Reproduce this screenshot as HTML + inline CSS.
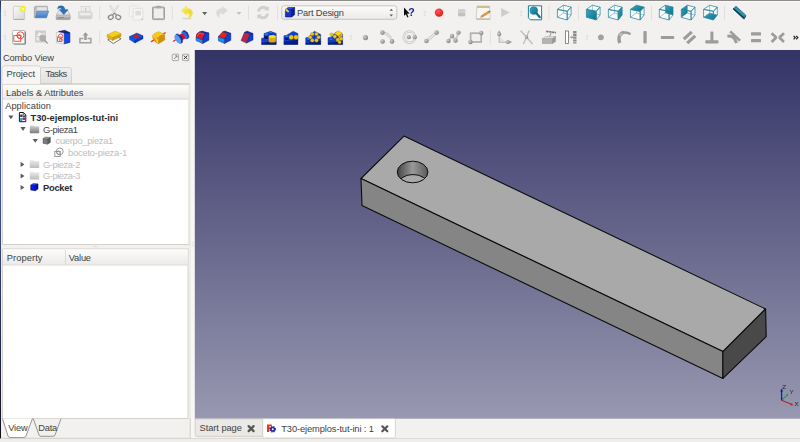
<!DOCTYPE html>
<html><head><meta charset="utf-8"><title>FreeCAD</title>
<style>
html,body{margin:0;padding:0;background:#f2f1f0;}
#app{position:relative;width:800px;height:442px;overflow:hidden;background:#f2f1f0;font-family:"Liberation Sans",sans-serif;font-size:9.3px;color:#424242;}
#gfx{position:absolute;left:0;top:0;}
.t{position:absolute;white-space:nowrap;line-height:12px;height:12px;}
.b{font-weight:bold;color:#2b2b2b;}
.g{color:#bdbdbd;}
</style></head><body>
<div id="app">
<svg id="gfx" width="800" height="442" viewBox="0 0 800 442">
<defs>
<linearGradient id="bg3d" x1="0" y1="0" x2="0" y2="1"><stop offset="0" stop-color="#333366"/><stop offset="1" stop-color="#9898b1"/></linearGradient>
<linearGradient id="hole" x1="0" y1="0" x2="1" y2="0"><stop offset="0" stop-color="#444"/><stop offset="0.5" stop-color="#999"/><stop offset="1" stop-color="#5a5a5a"/></linearGradient>
<linearGradient id="hdr" x1="0" y1="0" x2="0" y2="1"><stop offset="0" stop-color="#fcfcfb"/><stop offset="1" stop-color="#ebeae8"/></linearGradient>
<linearGradient id="tabi" x1="0" y1="0" x2="0" y2="1"><stop offset="0" stop-color="#f0efed"/><stop offset="1" stop-color="#e4e2df"/></linearGradient>
<linearGradient id="gfold" x1="0" y1="0" x2="0" y2="1"><stop offset="0" stop-color="#d8d8d8"/><stop offset="1" stop-color="#7a7a7a"/></linearGradient>
<linearGradient id="gfoldL" x1="0" y1="0" x2="0" y2="1"><stop offset="0" stop-color="#ededed"/><stop offset="1" stop-color="#bdbdbd"/></linearGradient>
<linearGradient id="gpage" x1="0" y1="0" x2="1" y2="1"><stop offset="0" stop-color="#fafafa"/><stop offset="1" stop-color="#d6d6d6"/></linearGradient>
<linearGradient id="gblue" x1="0" y1="0" x2="0" y2="1"><stop offset="0" stop-color="#7aaae0"/><stop offset="1" stop-color="#3f78bd"/></linearGradient>
<linearGradient id="gdrive" x1="0" y1="0" x2="0" y2="1"><stop offset="0" stop-color="#d8d8d8"/><stop offset="1" stop-color="#8c8c8c"/></linearGradient>
<linearGradient id="gteal" x1="0" y1="0" x2="1" y2="1"><stop offset="0" stop-color="#3aa6c0"/><stop offset="1" stop-color="#0d6f8c"/></linearGradient>
<linearGradient id="gyel" x1="0" y1="0" x2="0" y2="1"><stop offset="0" stop-color="#ffe14a"/><stop offset="1" stop-color="#d89a00"/></linearGradient>
<radialGradient id="gred" cx="0.4" cy="0.35" r="0.7"><stop offset="0" stop-color="#ff5a5a"/><stop offset="1" stop-color="#e01010"/></radialGradient>
<radialGradient id="gsph" cx="0.35" cy="0.35" r="0.7"><stop offset="0" stop-color="#cfcfcf"/><stop offset="1" stop-color="#808080"/></radialGradient>
<linearGradient id="lstripe" x1="0" y1="0" x2="0" y2="1"><stop offset="0" stop-color="#1c2c55"/><stop offset="0.03" stop-color="#4565a8"/><stop offset="0.45" stop-color="#3f5090"/><stop offset="0.75" stop-color="#262e55"/><stop offset="1" stop-color="#101018"/></linearGradient>
<linearGradient id="gundo" x1="0" y1="0" x2="1" y2="1"><stop offset="0" stop-color="#f6ea6a"/><stop offset="0.6" stop-color="#efdc28"/><stop offset="1" stop-color="#f2e45a"/></linearGradient>
<linearGradient id="glego" x1="0" y1="0" x2="1" y2="1"><stop offset="0" stop-color="#0c54e0"/><stop offset="0.6" stop-color="#0a3cc8"/><stop offset="1" stop-color="#0628a0"/></linearGradient>
<filter id="soft" x="0" y="0" width="800" height="442" filterUnits="userSpaceOnUse"><feGaussianBlur stdDeviation="0.32"/></filter>
<clipPath id="holeclip"><ellipse cx="412.6" cy="172" rx="15.3" ry="10.8"/></clipPath>
</defs>
<!-- window bg -->
<rect x="0" y="0" width="800" height="442" fill="#f2f1f0"/>
<rect x="0" y="0" width="800" height="0.85" fill="#6f6c69"/>
<rect x="0" y="0.8" width="1.2" height="442" fill="url(#lstripe)"/><rect x="1.2" y="1" width="1.2" height="441" fill="#f9f8f7"/>
<rect x="1.15" y="0.9" width="799" height="1" fill="#fbfbfa"/>
<!-- 3D view -->
<g id="view3d">
<rect x="194.7" y="49.8" width="606" height="368.9" fill="url(#bg3d)"/>
<polygon points="404,136.1 361,178.5 722.9,351.6 765.6,309" fill="#a9a9a9" stroke="#0c0c0c" stroke-width="1.1" stroke-linejoin="round"/>
<polygon points="361,178.5 362,205.5 722.9,378.4 722.9,351.6" fill="#858585" stroke="#0c0c0c" stroke-width="1.1" stroke-linejoin="round"/>
<polygon points="722.9,351.6 722.9,378.4 766.2,336.6 765.6,309" fill="#494949" stroke="#0c0c0c" stroke-width="1.1" stroke-linejoin="round"/>
<ellipse cx="412.6" cy="172" rx="15.3" ry="10.8" fill="url(#hole)"/>
<g clip-path="url(#holeclip)"><ellipse cx="413" cy="185.4" rx="15.3" ry="10.9" fill="#a9a9a9" stroke="#0c0c0c" stroke-width="1"/></g>
<ellipse cx="412.6" cy="172" rx="15.3" ry="10.8" fill="none" stroke="#0c0c0c" stroke-width="1"/>
</g>
<!-- left panel -->
<g id="panel">
<!-- tabs -->
<path d="M40.5,83.5 V69.5 Q40.5,67.5 42.5,67.5 H69.5 Q71.5,67.5 71.5,69.5 V83.5 Z" fill="url(#tabi)" stroke="#cfccc7" stroke-width="0.8"/>
<line x1="2" y1="83.6" x2="190" y2="83.6" stroke="#cfccc7" stroke-width="0.8"/>
<path d="M2,84.2 V68 Q2,65.8 4.2,65.8 H38.3 Q40.5,65.8 40.5,68 V84.2 Z" fill="#f7f6f5"/>
<path d="M2,84.2 V68 Q2,65.8 4.2,65.8 H38.3 Q40.5,65.8 40.5,68 V84.2" fill="none" stroke="#cfccc7" stroke-width="0.8"/>
<!-- tree -->
<rect x="2.6" y="84.8" width="186.4" height="159.6" fill="#fff" stroke="#cbc7c1" stroke-width="0.8"/>
<rect x="3" y="85.2" width="185.6" height="13.8" fill="url(#hdr)"/>
<line x1="3" y1="99.1" x2="188.6" y2="99.1" stroke="#d6d3ce" stroke-width="0.8"/>
<!-- splitter grip -->
<rect x="93" y="246.3" width="5" height="0.8" fill="#dcdad6"/>
<!-- property -->
<rect x="2.6" y="249" width="185.4" height="169.4" fill="#fff" stroke="#cbc7c1" stroke-width="0.8"/>
<rect x="3" y="249.4" width="184.6" height="15.4" fill="url(#hdr)"/>
<line x1="3" y1="265" x2="187.6" y2="265" stroke="#d6d3ce" stroke-width="0.8"/>
<line x1="65.5" y1="250" x2="65.5" y2="265" stroke="#d6d3ce" stroke-width="0.8"/>
<!-- bottom tabs View / Data -->
<path d="M33.3,418.8 L39,435 Q39.5,436.3 41,436.3 H53 Q54.5,436.3 55,435 L61,418.8" fill="#f2f1f0" stroke="#8c8a86" stroke-width="0.9"/>
<path d="M2.4,418.4 L8,436 Q8.5,437.5 10,437.5 H24 Q25.5,437.5 26,436 L32.5,418.4 Z" fill="#fff"/>
<path d="M2.4,418.4 L8,436 Q8.5,437.5 10,437.5 H24 Q25.5,437.5 26,436 L32.5,418.4" fill="none" stroke="#8c8a86" stroke-width="0.9"/>
</g>
<rect x="190.8" y="49.5" width="3.6" height="389" fill="#f8f7f6"/><rect x="189.5" y="84" width="1.3" height="354" fill="#edebe8"/>
<g fill="#d6d4d0"><rect x="191.6" y="242.1" width="2" height="0.6"/><rect x="191.6" y="243.9" width="2" height="0.6"/><rect x="191.6" y="245.7" width="2" height="0.6"/></g>
<path d="M190.3,418.4 V438.3 H1.2" fill="none" stroke="#d0cdc8" stroke-width="0.8"/>
<rect x="194.1" y="49.2" width="606" height="0.7" fill="#fbfbfa"/>
<!-- bottom line + main tabs -->
<g id="maintabs">
<line x1="0" y1="438.6" x2="800" y2="438.6" stroke="#d4d1cc" stroke-width="0.8"/>
<rect x="0" y="439" width="800" height="3" fill="#efeeec"/>
<path d="M195.3,419 V434.6 Q195.3,436.4 197.3,436.4 H262.7 V419 Z" fill="#eae9e6" stroke="#cfccc7" stroke-width="0.8"/>
<path d="M262.7,419 V436 Q262.7,438 264.7,438 H393.4 Q395.4,438 395.4,436 V419 Z" fill="#fff" stroke="#cfccc7" stroke-width="0.8"/><rect x="263.1" y="418.9" width="131.9" height="0.8" fill="#fff"/>

</g>
<g id="icons" filter="url(#soft)">
<rect x="3.9" y="10.80" width="2.2" height="0.6" fill="#d9d7d3"/><rect x="3.9" y="12.30" width="2.2" height="0.6" fill="#d9d7d3"/><rect x="3.9" y="13.80" width="2.2" height="0.6" fill="#d9d7d3"/><rect x="3.9" y="15.30" width="2.2" height="0.6" fill="#d9d7d3"/>
<g id="i-new"><rect x="13.4" y="6.3" width="11.2" height="13" rx="0.8" fill="url(#gpage)" stroke="#c4c4c4" stroke-width="0.8"/>
<line x1="13.6" y1="19.5" x2="24.4" y2="19.5" stroke="#aaa" stroke-width="0.9"/>
<circle cx="22.9" cy="8.9" r="3.1" fill="#f3ee3a"/><circle cx="22.9" cy="8.9" r="1.2" fill="#fbf9a8"/></g>
<g id="i-open"><path d="M34.3,17.8 V7 L35.8,6.2 H47 Q47.6,6.2 47.6,7 V12 H36 Z" fill="#b9b9b9" stroke="#9a9a9a" stroke-width="0.6"/>
<rect x="36.8" y="7.2" width="10" height="4.5" fill="#e4e4e4"/>
<path d="M35.2,17.8 L37.2,11.1 H48.7 L46.5,17.8 Z" fill="url(#gblue)" stroke="#3b73b5" stroke-width="0.6" stroke-linejoin="round"/></g>
<g id="i-save"><path d="M56.2,15.2 L59.2,9.4 H67.2 L70.2,15.2 Z" fill="#e2e2e2" stroke="#b4b4b4" stroke-width="0.7" stroke-linejoin="round"/>
<rect x="56.2" y="15.2" width="14" height="4.4" rx="0.8" fill="url(#gdrive)" stroke="#a0a0a0" stroke-width="0.7"/>
<rect x="58" y="17" width="6" height="0.9" fill="#8a8a8a"/>
<path d="M57.6,9 Q57.6,5.6 61,5.7 Q64.6,5.8 65,9.7 H68 L63.8,14.5 L59.4,9.7 H62 Q61.6,7.8 59.8,7.9 Q58.6,8 57.6,9 Z" fill="#2f6fb8" stroke="#245a9a" stroke-width="0.4" stroke-linejoin="round"/></g>
<g id="i-print" opacity="0.9"><rect x="81.2" y="6.4" width="8.8" height="6" fill="#ececec" stroke="#cfcfcf" stroke-width="0.7"/>
<rect x="84.9" y="8" width="1.4" height="3.6" fill="#c8c8c8"/>
<rect x="78.4" y="11.8" width="13.6" height="7" rx="1.4" fill="#dadada" stroke="#c6c6c6" stroke-width="0.7"/>
<rect x="79.6" y="13.2" width="11.2" height="1.6" fill="#f2f2f2"/>
<rect x="79.6" y="16.6" width="11.2" height="1" fill="#c4c4c4"/></g>
<line x1="99.6" y1="5.6" x2="99.6" y2="20.0" stroke="#e0deda" stroke-width="0.9"/>
<g id="i-cut" fill="none"><path d="M110.2,6.1 L116.6,15" stroke="#cfcfcf" stroke-width="1.9" stroke-linecap="round"/><path d="M110.2,6.1 L116.6,15" stroke="#f4f4f4" stroke-width="0.8" stroke-linecap="round"/>
<path d="M118,6.1 L111.7,15" stroke="#cfcfcf" stroke-width="1.9" stroke-linecap="round"/><path d="M118,6.1 L111.7,15" stroke="#f4f4f4" stroke-width="0.8" stroke-linecap="round"/>
<ellipse cx="110.8" cy="17.2" rx="2.5" ry="2.1" stroke="#8e8e8e" stroke-width="1.3" transform="rotate(-25 110.8 17.2)"/>
<ellipse cx="118.2" cy="17.2" rx="2.5" ry="2.1" stroke="#8e8e8e" stroke-width="1.3" transform="rotate(25 118.2 17.2)"/>
<path d="M112.6,15.2 L114.4,13.2 L116.2,15.2" stroke="#8e8e8e" stroke-width="1.2"/></g>
<g id="i-copy"><rect x="129.4" y="5.8" width="9.6" height="10.8" rx="0.6" fill="#f3f3f3" stroke="#e0e0e0" stroke-width="0.7"/>
<rect x="133.1" y="8.4" width="9.8" height="11.6" rx="0.6" fill="#f4f4f4" stroke="#dadada" stroke-width="0.7"/>
<rect x="135.4" y="10.8" width="5.6" height="4.6" fill="#dcdcdc"/><path d="M140.2,20 L142.9,17.2 V20 Z" fill="#cfcfcf"/></g>
<g id="i-paste"><rect x="152.5" y="7" width="12" height="12.6" rx="0.8" fill="#bdbdbd" stroke="#9c9c9c" stroke-width="0.9"/>
<rect x="154" y="8.4" width="9" height="9.6" fill="#eeeeee"/>
<rect x="156" y="5.8" width="5" height="2.4" rx="0.8" fill="#a8a8a8"/>
<path d="M160.6,18 L163,15.6 V18 Z" fill="#fafafa"/></g>
<line x1="172.3" y1="5.6" x2="172.3" y2="20.0" stroke="#e0deda" stroke-width="0.9"/>
<g id="i-undo"><ellipse cx="187" cy="18.6" rx="5" ry="1" fill="#dcdcda"/>
<path d="M181.2,10.5 L186.7,6.1 V8.4 Q192.6,8.6 192.6,13.2 Q192.4,16.6 188.4,18.6 Q190,15.6 188.8,13.8 Q188,12.8 186.7,12.8 V14.9 Z" fill="url(#gundo)" stroke="#eadb3a" stroke-width="0.4" stroke-linejoin="round"/>
<path d="M182.6,10.4 L186.2,7.6 V9.2" fill="none" stroke="#f9f08a" stroke-width="0.7"/></g>
<path d="M202.1,11.9 H207.2 L204.65,15.2 Z" fill="#626262"/>
<g id="i-redo"><path d="M227.6,10.5 L222.1,6.4 V8.6 Q216.4,8.8 216.3,13.2 Q216.5,16 219.6,17.6 Q218.6,15.4 219.8,13.8 Q220.6,12.8 222.1,12.8 V14.7 Z" fill="#dadada" stroke="#d4d4d4" stroke-width="0.3" stroke-linejoin="round"/></g>
<path d="M236.6,11.9 H241.4 L239,15 Z" fill="#c2c2c2"/>
<line x1="248.5" y1="5.6" x2="248.5" y2="20.0" stroke="#e0deda" stroke-width="0.9"/>
<g id="i-refresh" fill="none" stroke="#d0d0d0" stroke-width="2.9"><path d="M258.6,11.6 Q259.4,7.4 263.4,7.3 Q265.6,7.4 267,8.8"/><path d="M267.6,13.6 Q266.8,17.6 262.8,17.8 Q260.6,17.7 259.2,16.2"/>
<path d="M268.8,6 V10.6 H264.2 Z" fill="#cfcfcf" stroke="none"/><path d="M257.4,19 V14.4 H262 Z" fill="#cfcfcf" stroke="none"/></g>
<line x1="277.5" y1="5.6" x2="277.5" y2="20.0" stroke="#e0deda" stroke-width="0.9"/>
<g id="combo"><rect x="281.8" y="5.8" width="115" height="13.5" rx="2.4" fill="url(#hdr)" stroke="#bdb9b3" stroke-width="0.8"/>
<path d="M389.6,10.8 L391.3,8.8 L393,10.8 Z" fill="#555"/><path d="M389.6,14.6 L391.3,16.6 L393,14.6 Z" fill="#555"/>
<g><polygon points="285.4,9.6 291.6,9.6 291.6,17 285.4,17" fill="#1233c8" stroke="#061a6e" stroke-width="0.6"/><polygon points="285.4,9.6 288,7.6 294.6,7.6 291.6,9.6" fill="#2a50e6" stroke="#061a6e" stroke-width="0.6"/><polygon points="291.6,9.6 294.6,7.6 294.6,14.8 291.6,17" fill="#0a1f8c" stroke="#061a6e" stroke-width="0.6"/>
<polygon points="285.4,7.6 289.4,11.6 288,12.6 285.4,10.4" fill="#f2d21a"/></g></g>
<g id="i-what"><path d="M404,7.6 L404,15.8 L405.9,14.2 L407.3,17.6 L408.5,17 L407.1,13.8 L409.6,13.6 Z" fill="#0a0a0a"/>
<text x="408.2" y="16" font-family="Liberation Sans, sans-serif" font-weight="bold" font-size="10.5" fill="#1a1a9c">?</text></g>
<rect x="423.7" y="10.80" width="2.2" height="0.6" fill="#d9d7d3"/><rect x="423.7" y="12.30" width="2.2" height="0.6" fill="#d9d7d3"/><rect x="423.7" y="13.80" width="2.2" height="0.6" fill="#d9d7d3"/><rect x="423.7" y="15.30" width="2.2" height="0.6" fill="#d9d7d3"/>
<circle cx="439" cy="12.6" r="4.2" fill="url(#gred)"/>
<rect x="458" y="9" width="7.2" height="7.2" rx="0.6" fill="#cfcfcf"/><rect x="458" y="13" width="7.2" height="3.2" fill="#c2c2c2"/>
<g id="i-macro"><path d="M477,6 H489.6 L490.2,18.8 H476.2 Z" fill="#f6f6f4" stroke="#c0c0bc" stroke-width="0.7"/><rect x="477" y="6" width="12.6" height="2" fill="#cdbf8a"/>
<line x1="476.3" y1="19.2" x2="490.2" y2="19.2" stroke="#a8a8a4" stroke-width="0.9"/>
<path d="M481.4,15.6 L488.2,11.2 L489.4,12.8 L482.6,17 L480.6,17.4 Z" fill="#e8983a" stroke="#b8702a" stroke-width="0.4"/><path d="M488.2,11.2 L489.6,10.4 L490.6,11.8 L489.4,12.8 Z" fill="#d84a3a"/></g>
<path d="M501.2,8 L509.8,12.6 L501.2,17 Z" fill="#cdcdcd"/>
<rect x="519.9" y="10.80" width="2.2" height="0.6" fill="#d9d7d3"/><rect x="519.9" y="12.30" width="2.2" height="0.6" fill="#d9d7d3"/><rect x="519.9" y="13.80" width="2.2" height="0.6" fill="#d9d7d3"/><rect x="519.9" y="15.30" width="2.2" height="0.6" fill="#d9d7d3"/>
<g id="i-fit"><path d="M528.4,5.8 H541.6 V19.8 H530.4 L528.4,17.8 Z" fill="#ffffff" stroke="#1a7f99" stroke-width="1"/>
<circle cx="533.8" cy="10.6" r="3.9" fill="url(#gteal)" stroke="#0d6f8c" stroke-width="0.5"/><line x1="536.6" y1="13.6" x2="539.8" y2="17.2" stroke="#0d6f8c" stroke-width="2.2" stroke-linecap="round"/></g>
<line x1="549.0" y1="5.6" x2="549.0" y2="20.0" stroke="#e0deda" stroke-width="0.9"/>
<g transform="translate(557.4,5.0)" stroke="#24859e" stroke-width="0.75" fill="none" stroke-linejoin="round"><polygon points="0.0,4.4 9.8,6.3 9.8,15.0 0.0,12.3" fill="#ffffff" fill-opacity="0.8" stroke="none"/><polygon points="0.0,4.4 6.0,0.2 13.7,2.1 9.8,6.3" fill="#ffffff" fill-opacity="0.8" stroke="none"/><polygon points="9.8,6.3 13.7,2.1 13.7,10.0 9.8,15.0" fill="#ffffff" fill-opacity="0.8" stroke="none"/><path d="M6,0.2 V8 L0,12.3 M6,8 L13.7,10" stroke-width="0.6" stroke-opacity="0.75"/><polygon points="0.0,4.4 9.8,6.3 9.8,15.0 0.0,12.3" /><polygon points="0.0,4.4 6.0,0.2 13.7,2.1 9.8,6.3" /><polygon points="9.8,6.3 13.7,2.1 13.7,10.0 9.8,15.0" /></g>
<line x1="578.5" y1="5.6" x2="578.5" y2="20.0" stroke="#e0deda" stroke-width="0.9"/>
<g transform="translate(586.4,5.0)" stroke="#24859e" stroke-width="0.75" fill="none" stroke-linejoin="round"><polygon points="0.0,4.4 9.8,6.3 9.8,15.0 0.0,12.3" fill="#ffffff" fill-opacity="0.8" stroke="none"/><polygon points="0.0,4.4 6.0,0.2 13.7,2.1 9.8,6.3" fill="#ffffff" fill-opacity="0.8" stroke="none"/><polygon points="9.8,6.3 13.7,2.1 13.7,10.0 9.8,15.0" fill="#ffffff" fill-opacity="0.8" stroke="none"/><path d="M6,0.2 V8 L0,12.3 M6,8 L13.7,10" stroke-width="0.6" stroke-opacity="0.75"/><polygon points="0.0,4.4 9.8,6.3 9.8,15.0 0.0,12.3" fill="url(#gteal)" stroke="none"/><polygon points="0.0,4.4 9.8,6.3 9.8,15.0 0.0,12.3" /><polygon points="0.0,4.4 6.0,0.2 13.7,2.1 9.8,6.3" /><polygon points="9.8,6.3 13.7,2.1 13.7,10.0 9.8,15.0" /></g>
<g transform="translate(608.4,5.0)" stroke="#24859e" stroke-width="0.75" fill="none" stroke-linejoin="round"><polygon points="0.0,4.4 9.8,6.3 9.8,15.0 0.0,12.3" fill="#ffffff" fill-opacity="0.8" stroke="none"/><polygon points="0.0,4.4 6.0,0.2 13.7,2.1 9.8,6.3" fill="#ffffff" fill-opacity="0.8" stroke="none"/><polygon points="9.8,6.3 13.7,2.1 13.7,10.0 9.8,15.0" fill="#ffffff" fill-opacity="0.8" stroke="none"/><path d="M6,0.2 V8 L0,12.3 M6,8 L13.7,10" stroke-width="0.6" stroke-opacity="0.75"/><polygon points="9.8,6.3 13.7,2.1 13.7,10.0 9.8,15.0" fill="url(#gteal)" stroke="none"/><polygon points="0.0,4.4 9.8,6.3 9.8,15.0 0.0,12.3" /><polygon points="0.0,4.4 6.0,0.2 13.7,2.1 9.8,6.3" /><polygon points="9.8,6.3 13.7,2.1 13.7,10.0 9.8,15.0" /></g>
<g transform="translate(630.4,5.0)" stroke="#24859e" stroke-width="0.75" fill="none" stroke-linejoin="round"><polygon points="0.0,4.4 9.8,6.3 9.8,15.0 0.0,12.3" fill="#ffffff" fill-opacity="0.8" stroke="none"/><polygon points="0.0,4.4 6.0,0.2 13.7,2.1 9.8,6.3" fill="#ffffff" fill-opacity="0.8" stroke="none"/><polygon points="9.8,6.3 13.7,2.1 13.7,10.0 9.8,15.0" fill="#ffffff" fill-opacity="0.8" stroke="none"/><path d="M6,0.2 V8 L0,12.3 M6,8 L13.7,10" stroke-width="0.6" stroke-opacity="0.75"/><polygon points="0.0,4.4 6.0,0.2 13.7,2.1 9.8,6.3" fill="url(#gteal)" stroke="none"/><polygon points="0.0,4.4 9.8,6.3 9.8,15.0 0.0,12.3" /><polygon points="0.0,4.4 6.0,0.2 13.7,2.1 9.8,6.3" /><polygon points="9.8,6.3 13.7,2.1 13.7,10.0 9.8,15.0" /></g>
<line x1="651.5" y1="5.6" x2="651.5" y2="20.0" stroke="#e0deda" stroke-width="0.9"/>
<g transform="translate(659.3,5.0)" stroke="#24859e" stroke-width="0.75" fill="none" stroke-linejoin="round"><polygon points="0.0,4.4 9.8,6.3 9.8,15.0 0.0,12.3" fill="#ffffff" fill-opacity="0.8" stroke="none"/><polygon points="0.0,4.4 6.0,0.2 13.7,2.1 9.8,6.3" fill="#ffffff" fill-opacity="0.8" stroke="none"/><polygon points="9.8,6.3 13.7,2.1 13.7,10.0 9.8,15.0" fill="#ffffff" fill-opacity="0.8" stroke="none"/><polygon points="6.0,0.2 13.7,2.1 13.7,10.0 6.0,8.0" fill="url(#gteal)" stroke="none"/><path d="M6,0.2 V8 L0,12.3 M6,8 L13.7,10" stroke-width="0.6" stroke-opacity="0.75"/><polygon points="0.0,4.4 9.8,6.3 9.8,15.0 0.0,12.3" /><polygon points="0.0,4.4 6.0,0.2 13.7,2.1 9.8,6.3" /><polygon points="9.8,6.3 13.7,2.1 13.7,10.0 9.8,15.0" /></g>
<g transform="translate(681.3,5.0)" stroke="#24859e" stroke-width="0.75" fill="none" stroke-linejoin="round"><polygon points="0.0,4.4 9.8,6.3 9.8,15.0 0.0,12.3" fill="#ffffff" fill-opacity="0.8" stroke="none"/><polygon points="0.0,4.4 6.0,0.2 13.7,2.1 9.8,6.3" fill="#ffffff" fill-opacity="0.8" stroke="none"/><polygon points="9.8,6.3 13.7,2.1 13.7,10.0 9.8,15.0" fill="#ffffff" fill-opacity="0.8" stroke="none"/><polygon points="0.0,4.4 6.0,0.2 6.0,8.0 0.0,12.3" fill="url(#gteal)" stroke="none"/><path d="M6,0.2 V8 L0,12.3 M6,8 L13.7,10" stroke-width="0.6" stroke-opacity="0.75"/><polygon points="0.0,4.4 9.8,6.3 9.8,15.0 0.0,12.3" /><polygon points="0.0,4.4 6.0,0.2 13.7,2.1 9.8,6.3" /><polygon points="9.8,6.3 13.7,2.1 13.7,10.0 9.8,15.0" /></g>
<g transform="translate(703.6,5.0)" stroke="#24859e" stroke-width="0.75" fill="none" stroke-linejoin="round"><polygon points="0.0,4.4 9.8,6.3 9.8,15.0 0.0,12.3" fill="#ffffff" fill-opacity="0.8" stroke="none"/><polygon points="0.0,4.4 6.0,0.2 13.7,2.1 9.8,6.3" fill="#ffffff" fill-opacity="0.8" stroke="none"/><polygon points="9.8,6.3 13.7,2.1 13.7,10.0 9.8,15.0" fill="#ffffff" fill-opacity="0.8" stroke="none"/><polygon points="0.0,12.3 6.0,8.0 13.7,10.0 9.8,15.0" fill="url(#gteal)" stroke="none"/><path d="M6,0.2 V8 L0,12.3 M6,8 L13.7,10" stroke-width="0.6" stroke-opacity="0.75"/><polygon points="0.0,4.4 9.8,6.3 9.8,15.0 0.0,12.3" /><polygon points="0.0,4.4 6.0,0.2 13.7,2.1 9.8,6.3" /><polygon points="9.8,6.3 13.7,2.1 13.7,10.0 9.8,15.0" /></g>
<line x1="724.5" y1="5.6" x2="724.5" y2="20.0" stroke="#e0deda" stroke-width="0.9"/>
<g id="i-measure"><path d="M733,9 L736,6.2 L746,15.4 L743.6,18.8 Z" fill="#2f93b3" stroke="#0c4a5e" stroke-width="0.6" stroke-linejoin="round"/><path d="M733,9 L743.6,18.8 L744.4,17.6 L734,8.2 Z" fill="#0a3a4a"/>
<path d="M743.6,18.8 L746,15.4 L746,16.6 L744,19.4 Z" fill="#083040"/></g>
<rect x="3.9" y="34.70" width="2.2" height="0.6" fill="#d9d7d3"/><rect x="3.9" y="36.20" width="2.2" height="0.6" fill="#d9d7d3"/><rect x="3.9" y="37.70" width="2.2" height="0.6" fill="#d9d7d3"/><rect x="3.9" y="39.20" width="2.2" height="0.6" fill="#d9d7d3"/>
<g id="i-sk"><rect x="13.4" y="31.2" width="12.4" height="13.4" rx="1" fill="#5e5e5e"/><rect x="12.6" y="30.5" width="12.2" height="13.2" rx="0.8" fill="#fff" stroke="#a6a6a6" stroke-width="0.8"/>
<circle cx="20.4" cy="35.3" r="3.5" fill="none" stroke="#f04032" stroke-width="0.9"/><circle cx="19.2" cy="36.4" r="1.9" fill="none" stroke="#f04032" stroke-width="0.8"/>
<rect x="13.8" y="35.6" width="7" height="5.6" fill="none" stroke="#f04032" stroke-width="0.9"/></g>
<g id="i-vsk"><rect x="35" y="30.6" width="11" height="11.8" rx="0.8" fill="#cdcdcd"/><path d="M36.5,36 L39.5,32 L42,34 L44.5,32.5 V36 Z" fill="#f2f2f2"/><rect x="36.4" y="37" width="3.4" height="3.6" fill="#e9e9e9"/>
<circle cx="42.7" cy="38" r="3.4" fill="#a9a9a9" fill-opacity="0.85"/><line x1="45" y1="40.6" x2="47.2" y2="43" stroke="#9a9a9a" stroke-width="1.4" stroke-linecap="round"/></g>
<g id="i-map"><polygon points="58.4,31.6 64.6,30.3 69.9,32.6 63.8,33.6" fill="#0a2a9c" stroke="#061458" stroke-width="0.5"/><polygon points="63.8,33.2 69.9,32.8 69.9,42.4 63.8,44" fill="#0b49e2" stroke="#061458" stroke-width="0.5"/>
<polygon points="56.4,32.4 63.8,33.2 63.8,44 56.4,42.6" fill="#fdfdfd" stroke="#b0b0b0" stroke-width="0.6"/>
<circle cx="60.6" cy="36.2" r="2.2" fill="none" stroke="#f04a3a" stroke-width="0.9"/><rect x="57.6" y="37" width="3.6" height="4.4" fill="none" stroke="#f04a3a" stroke-width="0.9"/><circle cx="61" cy="40.2" r="1.6" fill="none" stroke="#f04a3a" stroke-width="0.8"/></g>
<g id="i-exp"><path d="M83.4,38.6 H79.9 V42.8 H90.9 V38.6 H87.6" fill="none" stroke="#a2a2a2" stroke-width="1.5"/><path d="M85.5,32.2 L88.4,35.5 H86.7 V40 H84.3 V35.5 H82.6 Z" fill="#9a9a9a"/></g>
<line x1="99.6" y1="30.5" x2="99.6" y2="44.5" stroke="#e0deda" stroke-width="0.9"/>
<g id="i-pad" stroke-linejoin="round"><polygon points="107.8,39.7 116,36 121,38.8 113.3,43.5" fill="#fff" stroke="#555" stroke-width="0.8"/>
<polygon points="107.2,34.7 112.7,37.5 112.7,40.6 107.2,37.8" fill="#e4b40e" stroke="#b88a08" stroke-width="0.4"/><polygon points="112.7,37.5 121,33.6 121,36.6 112.7,40.6" fill="#d29c08" stroke="#b88a08" stroke-width="0.4"/>
<polygon points="107.2,34.7 115.2,31.1 121,33.6 112.7,37.5" fill="#f6cf1c" stroke="#c89a0a" stroke-width="0.4"/></g>
<g id="i-pocket" stroke-linejoin="round"><polygon points="129.5,36.6 135,40 135,43 129.5,39.6" fill="#0a5ae8" stroke="#0828a0" stroke-width="0.4"/><polygon points="135,40 143,35.8 143,38.8 135,43" fill="#0838b8" stroke="#0828a0" stroke-width="0.4"/>
<polygon points="129.5,36.6 136.9,33 143,35.8 135,40" fill="#0c54e6" stroke="#0828a0" stroke-width="0.4"/><polygon points="132.8,36.3 136.6,34.2 139.9,35.9 136,38" fill="#e81818" stroke="#a01010" stroke-width="0.3"/></g>
<g id="i-rev" stroke-linejoin="round"><line x1="151" y1="41.9" x2="165.6" y2="32.5" stroke="#ff2a1a" stroke-width="1.3"/>
<path d="M152.4,36 Q152.6,33.6 158.6,31.8 L164.6,34.4 V40 L158.4,43.8 Q153.2,41.4 152.4,36 Z" fill="#e6a010" stroke="#b07808" stroke-width="0.4"/>
<path d="M152.4,36 Q152.6,33.6 158.6,31.8 L164.6,34.4 Q159,35 158.6,37.4 Q155,36.4 152.4,36 Z" fill="#f6cc1e"/><path d="M158.6,37.4 Q159,35 164.6,34.4 V40 L158.4,43.8 Z" fill="#cf8f0a"/>
<path d="M152.6,36.4 Q156.6,37 157.6,42.6" fill="none" stroke="#f8d83a" stroke-width="1.2"/></g>
<g id="i-groove"><line x1="173" y1="41.6" x2="177" y2="39" stroke="#ff2a1a" stroke-width="1.2"/><line x1="184" y1="34.4" x2="187.6" y2="32.2" stroke="#ff2a1a" stroke-width="1.2"/>
<ellipse cx="185.6" cy="34.6" rx="2.4" ry="4.6" transform="rotate(-32 185.6 34.6)" fill="#0a36c0" stroke="#061c70" stroke-width="0.4"/><ellipse cx="184.6" cy="35.2" rx="2.2" ry="4.4" transform="rotate(-32 184.6 35.2)" fill="#2a6ae6"/>
<ellipse cx="182.4" cy="36.6" rx="2.6" ry="3.2" transform="rotate(-32 182.4 36.6)" fill="#d81828"/><ellipse cx="181" cy="37.4" rx="2" ry="2.8" transform="rotate(-32 181 37.4)" fill="#b81020"/>
<ellipse cx="179" cy="38.6" rx="2.8" ry="5.2" transform="rotate(-32 179 38.6)" fill="#0a3ad0" stroke="#061c70" stroke-width="0.4"/><ellipse cx="177.8" cy="39.2" rx="2.4" ry="4.8" transform="rotate(-32 177.8 39.2)" fill="#5a9cec"/></g>
<g id="i-fillet" stroke="#08186a" stroke-width="0.45" stroke-linejoin="round"><polygon points="202.7,43.5 208.9,40.2 208.9,33 204.5,33.6 202.7,37.6" fill="#0c3fd6"/><polygon points="199.4,32 202.2,31.1 208.9,33 206,33.6" fill="#0a34b8"/>
<polygon points="196.1,37.2 202.7,39.8 202.7,43.5 196.1,40.6" fill="#1b8df2"/><path d="M196.1,37.2 Q196,33 199.4,32 L206,33.6 Q203,35 202.7,39.8 Z" fill="#de1a2c"/></g>
<path d="M197.4,36.6 Q197.6,33.8 200,33.2 L204,34.2" fill="none" stroke="#f4606a" stroke-width="0.8"/>
<g id="i-chamfer" stroke="#08186a" stroke-width="0.45" stroke-linejoin="round"><polygon points="224.6,43.5 230.8,40.2 230.8,33.4 228,33.2 224.6,38.6" fill="#0c3fd6"/><polygon points="222.5,32 225,31.1 230.8,33.4 228,33.2" fill="#0a34b8"/>
<polygon points="218.4,36.6 224.6,38.6 224.6,43.5 218.4,40.8" fill="#1b8df2"/><polygon points="218.4,36.6 222.5,32 228,33.2 224.6,38.6" fill="#f0200e"/></g>
<g id="i-draft" stroke="#08186a" stroke-width="0.45" stroke-linejoin="round"><polygon points="249.8,34 253,33.5 253,40 246.5,43.1" fill="#0c3fd6"/><polygon points="244.4,32.4 247,31.1 253,33.5 249.8,34" fill="#0a34b8"/>
<polygon points="241.1,40.6 244.4,32.4 249.8,34 246.5,43.1" fill="#b82840"/></g>
<g id="i-mir"><polygon points="261.6,44.5 261.6,38.2 264.0,38.0 264.0,33.6 270.6,31.3 276.2,33.5 276.2,44.5" fill="url(#glego)" stroke="#061458" stroke-width="0.4" stroke-linejoin="round"/><polygon points="261.6,42.8 276.2,41.0 276.2,44.5 261.6,44.5" fill="#05186a" fill-opacity="0.75"/><ellipse cx="266.2" cy="35.3" rx="1.9" ry="1.5" fill="#0a2288"/><ellipse cx="266.2" cy="34.4" rx="1.9" ry="1.3" fill="#1a7af0"/><ellipse cx="270.6" cy="33.5" rx="1.5" ry="1.2" fill="#0a2288"/><ellipse cx="270.6" cy="32.6" rx="1.5" ry="1.0" fill="#1a7af0"/><rect x="264.4" y="36" width="3.4" height="3" fill="#06146a"/><line x1="263.4" y1="43.2" x2="276" y2="32.8" stroke="#e8283a" stroke-width="0.6" stroke-dasharray="1.5,1"/><path d="M268.7,36.6 V41.0 A3.6,1.5 0 0 0 275.9,41.0 V36.6 Z" fill="#e0aa08"/><ellipse cx="272.3" cy="36.6" rx="3.6" ry="1.5" fill="#f8de20"/></g>
<g id="i-lin"><polygon points="283.9,44.5 283.9,35.8 286.6,35.2 293.2,31.3 297.9,33.5 297.9,44.5" fill="url(#glego)" stroke="#061458" stroke-width="0.4" stroke-linejoin="round"/><polygon points="283.9,41.6 297.9,39.8 297.9,44.5 283.9,44.5" fill="#05186a" fill-opacity="0.75"/><ellipse cx="286.8" cy="37.5" rx="1.8" ry="1.4" fill="#0a2288"/><ellipse cx="286.8" cy="36.6" rx="1.8" ry="1.3" fill="#1a7af0"/><rect x="285.2" y="37.4" width="3.4" height="2.4" fill="#06146a"/><circle cx="291.2" cy="37.2" r="2.2" fill="#eec41a" stroke="#a87c06" stroke-width="0.3"/><circle cx="296.0" cy="37.2" r="2.2" fill="#eec41a" stroke="#a87c06" stroke-width="0.3"/></g>
<g id="i-pol"><polygon points="305.7,44.5 305.7,37.8 308.4,37.2 314.4,31.3 320.7,34.4 320.7,44.5" fill="url(#glego)" stroke="#061458" stroke-width="0.4" stroke-linejoin="round"/><polygon points="305.7,42.8 320.7,41.0 320.7,44.5 305.7,44.5" fill="#05186a" fill-opacity="0.75"/><circle cx="316.5" cy="34.0" r="1.8" fill="#eec41a" stroke="#a87c06" stroke-width="0.3"/><circle cx="318.6" cy="37.2" r="1.8" fill="#eec41a" stroke="#a87c06" stroke-width="0.3"/><circle cx="316.5" cy="40.4" r="1.8" fill="#eec41a" stroke="#a87c06" stroke-width="0.3"/><circle cx="312.3" cy="40.4" r="1.8" fill="#eec41a" stroke="#a87c06" stroke-width="0.3"/><circle cx="310.2" cy="37.2" r="1.8" fill="#eec41a" stroke="#a87c06" stroke-width="0.3"/><circle cx="312.3" cy="34.0" r="1.8" fill="#eec41a" stroke="#a87c06" stroke-width="0.3"/><ellipse cx="308.4" cy="39.9" rx="1.5" ry="1.2" fill="#0a2288"/><ellipse cx="308.4" cy="39.0" rx="1.5" ry="1.0" fill="#1a7af0"/></g>
<g id="i-multi"><polygon points="328.0,44.5 328.0,37.8 330.6,37.2 336.0,32.0 342.6,34.4 342.6,44.5" fill="url(#glego)" stroke="#061458" stroke-width="0.4" stroke-linejoin="round"/><polygon points="328.0,42.8 342.6,41.0 342.6,44.5 328.0,44.5" fill="#05186a" fill-opacity="0.75"/><polygon points="334,33.6 338.2,30.8 342.4,33 338.4,36.2" fill="#f6d61e" stroke="#a87c06" stroke-width="0.3"/><polygon points="338.4,36.2 342.4,33 342.4,36 338.4,39" fill="#dcae0c"/><circle cx="331.6" cy="34.6" r="1.8" fill="#eec41a" stroke="#a87c06" stroke-width="0.3"/><circle cx="334.8" cy="36.6" r="1.8" fill="#eec41a" stroke="#a87c06" stroke-width="0.3"/><circle cx="337.8" cy="39.8" r="1.9" fill="#eec41a" stroke="#a87c06" stroke-width="0.3"/><circle cx="341.2" cy="38.8" r="1.8" fill="#eec41a" stroke="#a87c06" stroke-width="0.3"/><circle cx="339.6" cy="42.2" r="1.6" fill="#eec41a" stroke="#a87c06" stroke-width="0.3"/><ellipse cx="331.0" cy="40.5" rx="1.4" ry="1.1" fill="#0a2288"/><ellipse cx="331.0" cy="39.6" rx="1.4" ry="1.0" fill="#1a7af0"/></g>
<rect x="349.9" y="34.70" width="2.2" height="0.6" fill="#d9d7d3"/><rect x="349.9" y="36.20" width="2.2" height="0.6" fill="#d9d7d3"/><rect x="349.9" y="37.70" width="2.2" height="0.6" fill="#d9d7d3"/><rect x="349.9" y="39.20" width="2.2" height="0.6" fill="#d9d7d3"/>
<circle cx="365.5" cy="37.6" r="2.6" fill="url(#gsph)"/>
<path d="M382.5,32.5 Q390,33.4 392,41.5" fill="none" stroke="#c2c2c2" stroke-width="2.6" stroke-linecap="round"/><path d="M382.5,32.5 Q390,33.4 392,41.5" fill="none" stroke="#eeeeee" stroke-width="1.1" stroke-linecap="round"/><circle cx="382.4" cy="32.6" r="2.3" fill="url(#gsph)"/><circle cx="382.6" cy="41.5" r="2.3" fill="url(#gsph)"/><circle cx="392.0" cy="41.4" r="2.3" fill="url(#gsph)"/>
<circle cx="409.4" cy="37.2" r="5.7" fill="none" stroke="#c6c6c6" stroke-width="2.5"/><circle cx="409.4" cy="37.2" r="5.7" fill="none" stroke="#ececec" stroke-width="1.1"/><circle cx="408.8" cy="37.2" r="2.1" fill="url(#gsph)"/><circle cx="414.8" cy="37.2" r="2.1" fill="url(#gsph)"/>
<path d="M426.5,41 L436.5,32.6" fill="none" stroke="#c2c2c2" stroke-width="2.8" stroke-linecap="round"/><path d="M426.5,41 L436.5,32.6" fill="none" stroke="#eeeeee" stroke-width="1.3" stroke-linecap="round"/><circle cx="426.4" cy="41.0" r="2.3" fill="url(#gsph)"/><circle cx="436.6" cy="32.6" r="2.3" fill="url(#gsph)"/>
<path d="M448.5,41 L452,36 L455.5,40.5 L458.5,32.6" fill="none" stroke="#c2c2c2" stroke-width="1.9" stroke-linecap="round"/><path d="M448.5,41 L452,36 L455.5,40.5 L458.5,32.6" fill="none" stroke="#eeeeee" stroke-width="0.4" stroke-linecap="round"/><circle cx="448.5" cy="41.0" r="2.2" fill="url(#gsph)"/><circle cx="452.0" cy="36.0" r="2.2" fill="url(#gsph)"/><circle cx="455.5" cy="40.5" r="2.2" fill="url(#gsph)"/><circle cx="458.5" cy="32.6" r="2.2" fill="url(#gsph)"/>
<rect x="470.6" y="33.2" width="10.6" height="8.8" fill="#f0f0f0" stroke="#b0b0b0" stroke-width="1.7"/><circle cx="470.4" cy="42.0" r="2.2" fill="url(#gsph)"/><circle cx="481.2" cy="33.0" r="2.2" fill="url(#gsph)"/>
<line x1="490.4" y1="30.5" x2="490.4" y2="44.5" stroke="#e0deda" stroke-width="0.9"/>
<path d="M499.2,31.4 V42.2 H511" fill="none" stroke="#b6b6b6" stroke-width="1.3"/><path d="M499.8,36 L505,41.6 H499.8 Z" fill="#e2e2e2"/><path d="M497.6,33 L499.2,30.2 L500.8,33 Z" fill="#a8a8a8"/><path d="M509.6,40.5 L512,42.1 L509.6,43.7 Z" fill="#a8a8a8"/><circle cx="499.2" cy="34.2" r="2.0" fill="url(#gsph)"/><circle cx="507.8" cy="42.1" r="2.0" fill="url(#gsph)"/>
<path d="M520.6,30.5 L532.6,44 M529.2,30.5 L523.4,44" fill="none" stroke="#bdbdbd" stroke-width="1.3"/><circle cx="526.5" cy="37.0" r="1.8" fill="url(#gsph)"/>
<g id="i-ext"><polygon points="542.2,38.8 545.8,36.4 555.6,36.4 552.4,38.8" fill="#dcdcdc" stroke="#a6a6a6" stroke-width="0.5"/><rect x="542.2" y="38.8" width="10.2" height="4.8" fill="#b4b4b4" stroke="#9a9a9a" stroke-width="0.5"/><polygon points="552.4,38.8 555.6,36.4 555.6,41.4 552.4,43.6" fill="#989898" stroke="#8c8c8c" stroke-width="0.4"/><line x1="546.2" y1="31.4" x2="556" y2="32.6" stroke="#707070" stroke-width="1.6" stroke-dasharray="2.4,0.6"/><line x1="551.4" y1="32.6" x2="549.6" y2="36.4" stroke="#808080" stroke-width="0.8"/></g>
<g id="i-cons"><rect x="565.6" y="31" width="3" height="12.4" fill="#fff" stroke="#6e6e6e" stroke-width="0.8"/><line x1="574.8" y1="31" x2="574.8" y2="43.6" stroke="#8a8a8a" stroke-width="3.4" stroke-dasharray="2.2,0.6"/><path d="M569.6,37.2 H572.6 M571.4,36 L572.8,37.2 L571.4,38.4" fill="none" stroke="#888" stroke-width="0.8"/></g>
<rect x="585.9" y="34.70" width="2.2" height="0.6" fill="#d9d7d3"/><rect x="585.9" y="36.20" width="2.2" height="0.6" fill="#d9d7d3"/><rect x="585.9" y="37.70" width="2.2" height="0.6" fill="#d9d7d3"/><rect x="585.9" y="39.20" width="2.2" height="0.6" fill="#d9d7d3"/>
<circle cx="600.9" cy="37.3" r="2.9" fill="#a0a0a0"/>
<path d="M629.6,33.6 Q626,32 623.4,32.6" fill="none" stroke="#9c9c9c" stroke-width="2.6" stroke-linecap="round"/><path d="M623.6,32.4 Q619.4,33.4 619,38 Q618.8,40.6 619.8,43" fill="none" stroke="#9c9c9c" stroke-width="3.4" stroke-linecap="butt"/><circle cx="620.9" cy="34.6" r="1.8" fill="#bcbcbc"/>
<rect x="643.4" y="31" width="3.3" height="12.6" rx="1" fill="#9c9c9c"/>
<rect x="660.8" y="36" width="13.4" height="3" rx="0.8" fill="#9c9c9c"/>
<path d="M683.8,39.2 L691.8,31.8 M687.2,43.2 L695.2,35.8" stroke="#9c9c9c" stroke-width="3.2" fill="none"/>
<path d="M711.9,31.6 V41" stroke="#9c9c9c" stroke-width="3" fill="none"/><rect x="705.3" y="40.3" width="13.2" height="3.3" rx="0.8" fill="#9c9c9c"/>
<path d="M730.2,31.4 L740,40.8" stroke="#9c9c9c" stroke-width="2.7" fill="none"/><path d="M727.4,36.2 Q734.4,35 736.4,43.2" stroke="#9c9c9c" stroke-width="2.9" fill="none"/>
<rect x="751" y="32.3" width="10" height="3.3" rx="0.6" fill="#9c9c9c"/><rect x="751" y="39" width="10" height="3.3" rx="0.6" fill="#9c9c9c"/>
<path d="M771.6,33.2 L776.2,37.6 L771.6,42 M784,33.2 L779.4,37.6 L784,42" stroke="#9c9c9c" stroke-width="2.7" fill="none" stroke-linejoin="bevel"/>
<path d="M793.6,35.9 L795.2,37.6 L793.6,39.3 M796.2,35.9 L797.8,37.6 L796.2,39.3" stroke="#1c1c1c" stroke-width="1.2" fill="none"/>
<path d="M8.3,115.5 H13.5 L10.9,119.3 Z" fill="#5a5a5a"/><path d="M20.4,127.1 H25.6 L23.0,130.9 Z" fill="#5a5a5a"/><path d="M32.7,139.0 H37.9 L35.3,142.8 Z" fill="#5a5a5a"/><path d="M20.6,161.8 V167.0 L24.4,164.4 Z" fill="#5a5a5a"/><path d="M20.6,173.4 V178.6 L24.4,176.0 Z" fill="#5a5a5a"/><path d="M20.6,184.9 V190.1 L24.4,187.5 Z" fill="#5a5a5a"/><g id="t-doc"><path d="M19.4,112.5 H23.4 L25.8,114.9 V121.7 H19.4 Z" fill="#fff" stroke="#161616" stroke-width="1" stroke-linejoin="round"/><path d="M23.2,112.6 V115.2 H25.7" fill="none" stroke="#161616" stroke-width="0.7"/><rect x="20.2" y="118" width="2.1" height="3" fill="#18a8b8"/><rect x="22.5" y="117.4" width="2.5" height="2.6" fill="#a81cb8"/><rect x="20.2" y="114.6" width="2.4" height="2.4" fill="#3a3a3a"/><rect x="23" y="116" width="2" height="1" fill="#555"/></g><path d="M29.8,133.2 V126.3 Q29.8,125.3 30.8,125.3 H33.2 L34.2,126.3 H39.2 V133.2 Z" fill="url(#gfold)"/><path d="M29.8,167.9 V161.0 Q29.8,160.0 30.8,160.0 H33.2 L34.2,161.0 H39.2 V167.9 Z" fill="url(#gfoldL)"/><path d="M29.8,179.5 V172.6 Q29.8,171.6 30.8,171.6 H33.2 L34.2,172.6 H39.2 V179.5 Z" fill="url(#gfoldL)"/><g id="t-body" stroke="#4a4a4a" stroke-width="0.4" stroke-linejoin="round"><polygon points="43,138.6 47.6,139 47.6,144.2 43,143.4" fill="#7c7c7c"/><polygon points="43,138.6 45.6,137 50.4,137.4 47.6,139" fill="#9a9a9a"/><polygon points="47.6,139 50.4,137.4 50.4,142.4 47.6,144.2" fill="#5e5e5e"/></g><g id="t-sk" fill="none" stroke="#8c8c8c" stroke-width="0.9"><circle cx="59.8" cy="151.4" r="3.4"/><rect x="54.8" y="151.4" width="5.4" height="5"/><circle cx="58.4" cy="152.6" r="1.6" stroke-width="0.7"/></g><g id="t-pocket" stroke="#06104a" stroke-width="0.5" stroke-linejoin="round"><polygon points="30.7,185.2 35.2,185.6 35.2,190.8 30.7,190" fill="#0a12f0"/><polygon points="30.7,185.2 33.2,183.6 38,184 35.2,185.6" fill="#2a3af8"/><polygon points="35.2,185.6 38,184 38,189 35.2,190.8" fill="#0608b0"/></g>
<g id="dockbtn" fill="none" stroke="#8e8c88" stroke-width="0.7"><rect x="172.2" y="54.2" width="6.4" height="6.4" rx="0.8"/><rect x="182.4" y="54.2" width="6.4" height="6.4" rx="0.8"/><path d="M174,59 L176.8,56 M175.2,55.8 H177 V57.6" stroke="#666" stroke-width="0.7"/><path d="M183.8,55.6 L187.4,59.2 M187.4,55.6 L183.8,59.2" stroke="#333" stroke-width="1"/></g><path d="M248.6,426.1 L253.6,431.1 M253.6,426.1 L248.6,431.1" stroke="#555555" stroke-width="2.2" stroke-linecap="round" fill="none"/><path d="M382.3,426.3 L387.3,431.3 M387.3,426.3 L382.3,431.3" stroke="#555555" stroke-width="2.2" stroke-linecap="round" fill="none"/><g id="fcicon"><path d="M267,424.4 H271.8 V426.2 H269.2 V427.4 H271 V429.2 H269.2 V431.9 H267 Z" fill="#f0301a"/><circle cx="272.7" cy="429.3" r="2.5" fill="#1a2aa0" stroke="#1a2aa0" stroke-width="1.6" stroke-dasharray="1.1,0.9"/><circle cx="272.7" cy="429.3" r="1" fill="#fff"/></g><g id="axis" stroke-width="1.1" fill="none"><line x1="781.6" y1="400.2" x2="787.4" y2="394.8" stroke="#1e9a3c"/><path d="M786,394.6 L788.4,393.8 L787.6,396.2 Z" fill="#1e9a3c" stroke="none"/><line x1="781.6" y1="400.2" x2="792" y2="404.6" stroke="#b02a2a"/><path d="M791.2,403 L793.6,405.2 L790.4,405.4 Z" fill="#b02a2a" stroke="none"/><line x1="781.6" y1="400.4" x2="781.6" y2="390" stroke="#1a1a9c" stroke-width="1.3"/><path d="M780.2,391.4 L781.6,388.4 L783,391.4 Z" fill="#1a1a9c" stroke="none"/></g><g font-family="Liberation Sans, sans-serif" font-size="6.2" fill="#1c1c28"><text x="782.2" y="388.6">Z</text><text x="789.4" y="393.8">Y</text><text x="794.4" y="406.2">X</text></g>

</g>
</svg>

<div class="t " id="t0" style="left:2.90px;top:51.68px;letter-spacing:-0.155px;">Combo View</div>
<div class="t " id="t1" style="left:6.60px;top:68.38px;letter-spacing:-0.077px;">Project</div>
<div class="t " id="t2" style="left:45.60px;top:68.38px;letter-spacing:-0.553px;">Tasks</div>
<div class="t " id="t3" style="left:6.00px;top:86.78px;letter-spacing:-0.002px;">Labels &amp; Attributes</div>
<div class="t " id="t4" style="left:5.20px;top:99.88px;letter-spacing:0.029px;">Application</div>
<div class="t b" id="t5" style="left:30.60px;top:111.88px;letter-spacing:-0.046px;">T30-ejemplos-tut-ini</div>
<div class="t " id="t6" style="left:43.00px;top:123.78px;letter-spacing:-0.392px;">G-pieza1</div>
<div class="t g" id="t7" style="left:55.50px;top:134.78px;letter-spacing:-0.269px;">cuerpo_pieza1</div>
<div class="t g" id="t8" style="left:68.00px;top:146.58px;letter-spacing:-0.180px;">boceto-pieza-1</div>
<div class="t g" id="t9" style="left:43.00px;top:158.58px;letter-spacing:-0.425px;">G-pieza-2</div>
<div class="t g" id="t10" style="left:43.00px;top:169.78px;letter-spacing:-0.425px;">G-pieza-3</div>
<div class="t b" id="t11" style="left:43.00px;top:181.88px;letter-spacing:-0.250px;">Pocket</div>
<div class="t " id="t12" style="left:6.80px;top:251.78px;letter-spacing:0.082px;">Property</div>
<div class="t " id="t13" style="left:68.80px;top:251.78px;letter-spacing:-0.219px;">Value</div>
<div class="t " id="t14" style="left:8.20px;top:422.28px;letter-spacing:-0.146px;">View</div>
<div class="t " id="t15" style="left:38.20px;top:422.28px;letter-spacing:-0.210px;">Data</div>
<div class="t " id="t16" style="left:297.00px;top:6.78px;letter-spacing:-0.162px;">Part Design</div>
<div class="t " id="t17" style="left:199.60px;top:422.48px;letter-spacing:-0.071px;">Start page</div>
<div class="t " id="t18" style="left:281.30px;top:422.58px;letter-spacing:-0.103px;">T30-ejemplos-tut-ini : 1</div>
</div>
</body></html>
